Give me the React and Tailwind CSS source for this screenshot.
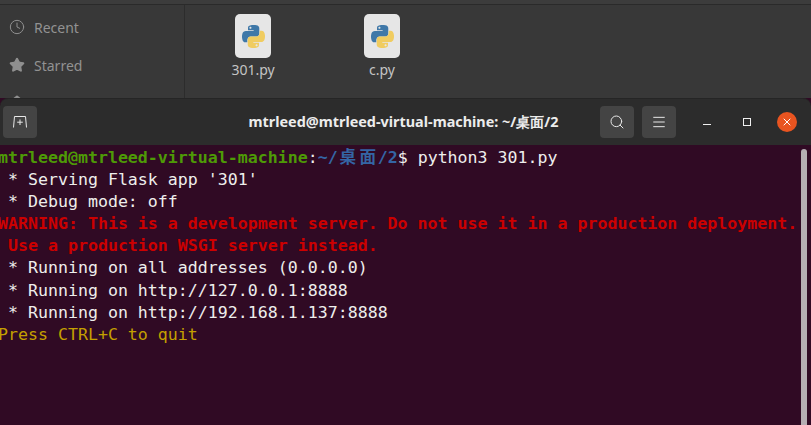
import { Clock, Star, Home, Search, Menu, X } from 'lucide-react';

const BLUE = 'M54.9 0C50.3 0 46 .4 42.1 1.1 30.7 3.1 28.7 7.3 28.7 15v10.2h27v3.4H18.6c-7.8 0-14.7 4.7-16.8 13.6-2.5 10.2-2.6 16.6 0 27.2 1.9 7.9 6.5 13.6 14.3 13.6h9.2V71.8c0-8.9 7.7-16.7 16.8-16.7h27c7.5 0 13.5-6.2 13.5-13.7V15c0-7.3-6.1-12.7-13.5-13.9C63.6.3 59.5 0 54.9 0zM40.3 8.2c2.8 0 5.1 2.3 5.1 5.1s-2.3 5.1-5.1 5.1-5.1-2.3-5.1-5.1 2.3-5.1 5.1-5.1z';

function PyFile({ name }) {
    return (
        <div className="flex w-[80px] flex-col items-center">
            <div className="flex h-[44px] w-[36px] items-center justify-center rounded-[5px] bg-[#e6e6e6]">
                <svg width="23" height="23" viewBox="0 0 110 110">
                    <path d={BLUE} fill="#3f78a8" fillRule="evenodd" />
                    <path d={BLUE} fill="#f0cc60" fillRule="evenodd" transform="rotate(180 55 55)" />
                </svg>
            </div>
            <span className="mt-[2px] text-[14px] leading-[20px] text-[#c4c4c4]">{name}</span>
        </div>
    );
}

function SideItem({ icon, label }) {
    return (
        <div className="flex h-[38px] items-center gap-[9px] pl-[9px] text-[#8f8f8f]">
            {icon}
            <span className="text-[14px] text-[#929292]">{label}</span>
        </div>
    );
}

function HeaderButton({ children }) {
    return (
        <div className="flex h-[32px] w-[34px] items-center justify-center rounded-[4px] bg-[#444444] text-[#e8e8e8]">
            {children}
        </div>
    );
}

const LINES = [
    { text: " * Serving Flask app '301'", color: 'text-[#eeeeec]' },
    { text: ' * Debug mode: off', color: 'text-[#eeeeec]' },
    { text: 'WARNING: This is a development server. Do not use it in a production deployment.', color: 'text-[#cc0000] font-bold' },
    { text: ' Use a production WSGI server instead.', color: 'text-[#cc0000] font-bold' },
    { text: ' * Running on all addresses (0.0.0.0)', color: 'text-[#eeeeec]' },
    { text: ' * Running on http://127.0.0.1:8888', color: 'text-[#eeeeec]' },
    { text: ' * Running on http://192.168.1.137:8888', color: 'text-[#eeeeec]' },
    { text: 'Press CTRL+C to quit', color: 'text-[#c4a000]' },
];

export default function App() {
    return (
        <div className="flex h-[425px] w-[811px] flex-col overflow-hidden bg-[#300a24] font-['Noto_Sans',sans-serif]">
            {/* file manager behind the terminal */}
            <div className="h-[5px] bg-[#3c3c3c] border-b border-[#2a2a2a]" />
            <div className="flex h-[93px] bg-[#383838]">
                <div className="w-[185px] overflow-hidden border-r border-[#2c2c2c] pt-[3px]">
                    <SideItem icon={<Clock size={16} strokeWidth={1.5} />} label="Recent" />
                    <SideItem icon={<Star size={16} fill="currentColor" />} label="Starred" />
                    <SideItem icon={<Home size={16} fill="currentColor" />} />
                </div>
                <div className="flex gap-[49px] pl-[28px] pt-[9px]">
                    <PyFile name="301.py" />
                    <PyFile name="c.py" />
                </div>
            </div>

            {/* terminal header bar */}
            <div className="flex h-[47px] items-center rounded-t-[8px] border-t border-[#252525] bg-[#2c2c2c] pl-[3px] pr-[14px]">
                <div className="w-[208px] shrink-0">
                    <HeaderButton>
                        <svg width="16" height="16" viewBox="0 0 16 16" fill="none" stroke="currentColor" strokeWidth="1">
                            <path d="M1.5 13.5 L2.5 2.5 H13.5 L14.5 13.5" />
                            <path d="M8 5.5 V11 M5.2 8.2 H10.8" />
                        </svg>
                    </HeaderButton>
                </div>
                <div className="flex-1 whitespace-nowrap pr-[4px] text-center text-[14.4px] font-bold text-[#ececec]">
                    mtrleed@mtrleed-virtual-machine: ~/桌面/2
                </div>
                <div className="flex items-center gap-[8px]">
                    <HeaderButton><Search size={16} strokeWidth={1.5} /></HeaderButton>
                    <HeaderButton><Menu size={16} strokeWidth={1.5} /></HeaderButton>
                </div>
                <div className="ml-[27px] flex w-[8px] items-end justify-center">
                    <div className="mt-[4px] h-[1px] w-[8px] bg-[#f0f0f0]" />
                </div>
                <div className="ml-[32px] h-[8px] w-[8px] border border-[#f0f0f0]" />
                <div className="ml-[26px] flex h-[20px] w-[20px] items-center justify-center rounded-full bg-[#e95420] text-white">
                    <X size={12} strokeWidth={2} />
                </div>
            </div>

            {/* terminal body */}
            <div className="relative flex-1 pt-[2px]">
                <div className="ml-[-2px] whitespace-pre font-['DejaVu_Sans_Mono','Noto_Sans_CJK_SC',monospace] text-[16.6px] leading-[22.1px]">
                    <div>
                        <span className="font-bold text-[#4e9a06]">mtrleed@mtrleed-virtual-machine</span>
                        <span className="text-[#eeeeec]">:</span>
                        <span className="font-bold text-[#3465a4]">~/<span className="inline-block w-[20px] text-center">桌</span><span className="inline-block w-[20px] text-center">面</span>/2</span>
                        <span className="text-[#eeeeec]">$ python3 301.py</span>
                    </div>
                    {LINES.map((line, i) => (
                        <div key={i} className={line.color}>{line.text}</div>
                    ))}
                </div>
                <div className="absolute right-[4px] top-[4px] bottom-0 w-[6px] rounded-t-full bg-[#b5aeb3]" />
            </div>
        </div>
    );
}
